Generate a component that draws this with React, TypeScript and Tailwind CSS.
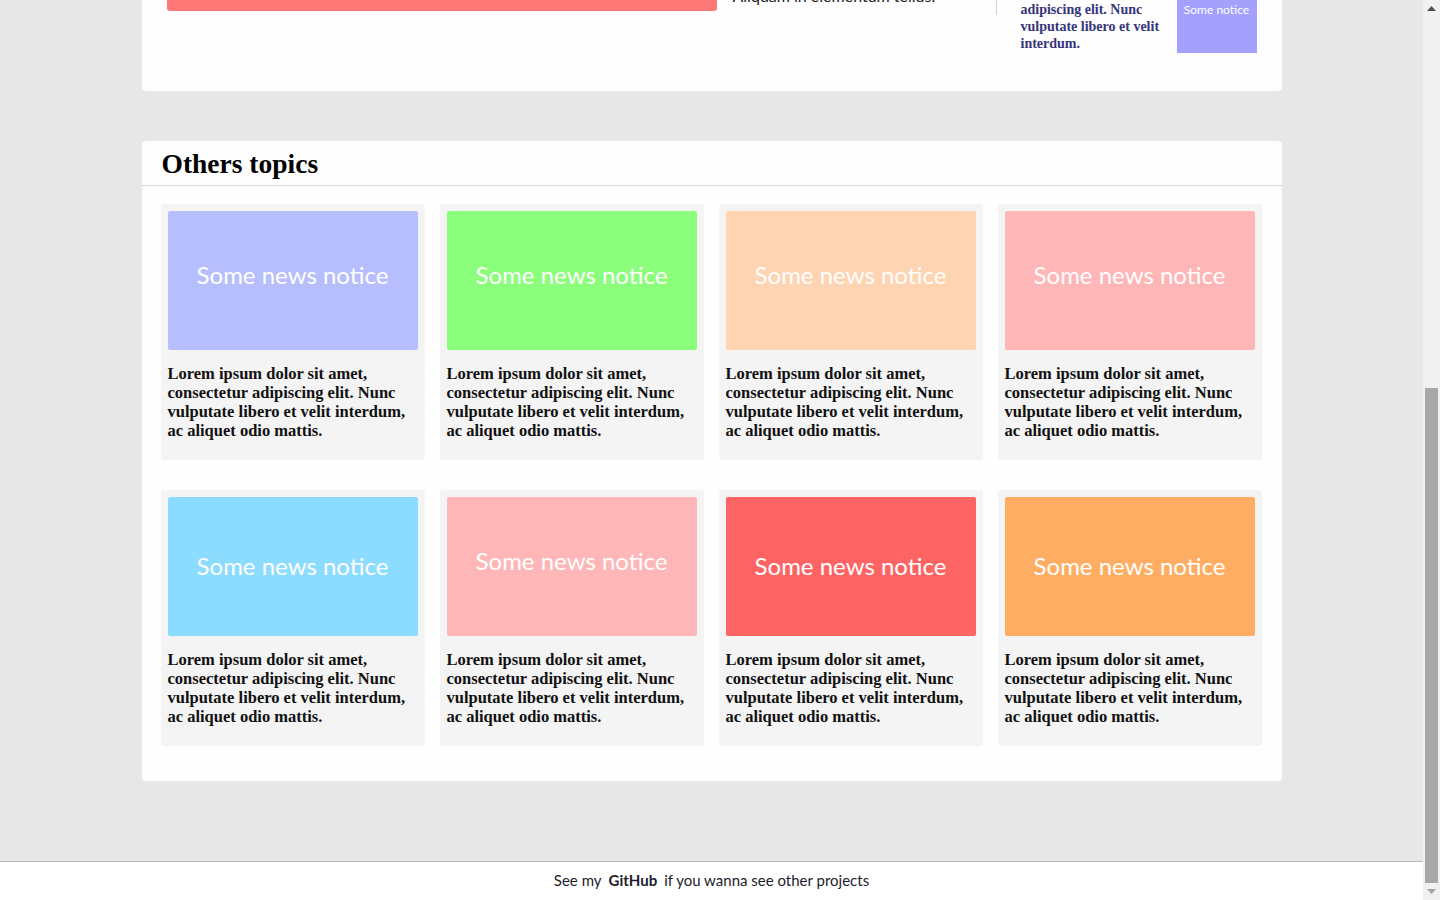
const serif = "font-['Liberation_Serif',serif]";
const sans = "font-['Lato',sans-serif]";

type Topic = { color: string; lift?: boolean };

const topics: Topic[] = [
  { color: "bg-[#b7befe]", lift: true },
  { color: "bg-[#8bff7c]", lift: true },
  { color: "bg-[#ffd4b2]", lift: true },
  { color: "bg-[#ffb6b6]", lift: true },
  { color: "bg-[#8cdcff]" },
  { color: "bg-[#ffb6b6]", lift: true },
  { color: "bg-[#ff6464]" },
  { color: "bg-[#ffad62]" },
];

function TopicCard({ topic }: { topic: Topic }) {
  return (
    <div className="rounded-[3px] bg-[#f4f4f4] p-[7px] pb-[20px]">
      <div
        className={`flex h-[139px] items-center justify-center rounded-[2px] ${topic.color} ${
          topic.lift ? "pb-[12px]" : "pb-[2px]"
        }`}
      >
        <span className={`${sans} text-[24px] leading-8 text-white`}>Some news notice</span>
      </div>
      <p className={`${serif} mt-[14px] w-[241px] text-[16.5px] font-bold leading-[19px] text-[#111]`}>
        Lorem ipsum dolor sit amet, consectetur adipiscing elit. Nunc vulputate libero et velit
        interdum, ac aliquet odio mattis.
      </p>
    </div>
  );
}

function Scrollbar() {
  return (
    <div className="flex h-[900px] w-[17px] flex-col bg-[#f1f1f1]">
      <div className="flex h-[17px] items-center justify-center">
        <svg width="9" height="5" viewBox="0 0 9 5">
          <path d="M0 5 L4.5 0 L9 5 Z" fill="#505050" />
        </svg>
      </div>
      <div className="h-[371px]" />
      <div className="mx-[2px] h-[495px] bg-[#a8a8a8]" />
      <div className="flex h-[17px] items-center justify-center">
        <svg width="9" height="5" viewBox="0 0 9 5">
          <path d="M0 0 L9 0 L4.5 5 Z" fill="#a3a3a3" />
        </svg>
      </div>
    </div>
  );
}

export default function App() {
  return (
    <div className="flex h-[900px] overflow-hidden bg-[#e7e7e7]">
      <div className="flex w-[1423px] flex-col">
        {/* previous section, scrolled mostly out of view */}
        <section className="mx-auto -mt-[197px] w-[1140px] rounded bg-[#fefefe] px-[25px] pb-[38px]">
          <div className="flex h-[250px] items-end">
            <div className="mb-[42px] h-[160px] w-[550px] rounded-b-[3px] bg-[#ff7878]" />
            <p className={`${sans} mb-[45px] ml-4 w-[247px] text-[16px] leading-6 text-[#222]`}>
              Aliquam in elementum tellus.
            </p>
            <div className="mb-[38px] ml-4 h-[120px] w-px bg-[#d2d2d2]" />
            <p className={`${serif} mb-px ml-6 w-[150px] text-[14px] font-bold leading-[17px] text-[#35357c]`}>
              Lorem ipsum dolor sit amet, consectetur adipiscing elit. Nunc vulputate libero et velit
              interdum.
            </p>
            <div className="ml-[6px] flex h-[53px] w-20 justify-center bg-[#a4a1fd] pt-[1px]">
              <span className={`${sans} text-[12px] leading-[18px] text-white`}>Some notice</span>
            </div>
          </div>
        </section>

        {/* Others topics */}
        <section className="mx-auto mt-[50px] w-[1140px] rounded bg-[#fefefe]">
          <div className="h-[45px] border-b border-[#d6d6d6] px-5 pt-px">
            <h2 className={`${serif} text-[27.5px] font-bold leading-[43px] text-black`}>Others topics</h2>
          </div>
          <div className="grid grid-cols-4 gap-x-[15px] gap-y-[30px] pb-[35px] pl-[19px] pr-5 pt-[18px]">
            {topics.map((t, i) => (
              <TopicCard key={i} topic={t} />
            ))}
          </div>
        </section>

        <footer className="mt-[80px] flex h-[39px] items-center justify-center border-t border-[#b9b5c2] bg-white pb-px">
          <p className={`${sans} text-[15px] text-[#1c1c2c]`}>
            See my<span className="mx-[7px] font-bold">GitHub</span>if you wanna see other projects
          </p>
        </footer>
      </div>
      <Scrollbar />
    </div>
  );
}
